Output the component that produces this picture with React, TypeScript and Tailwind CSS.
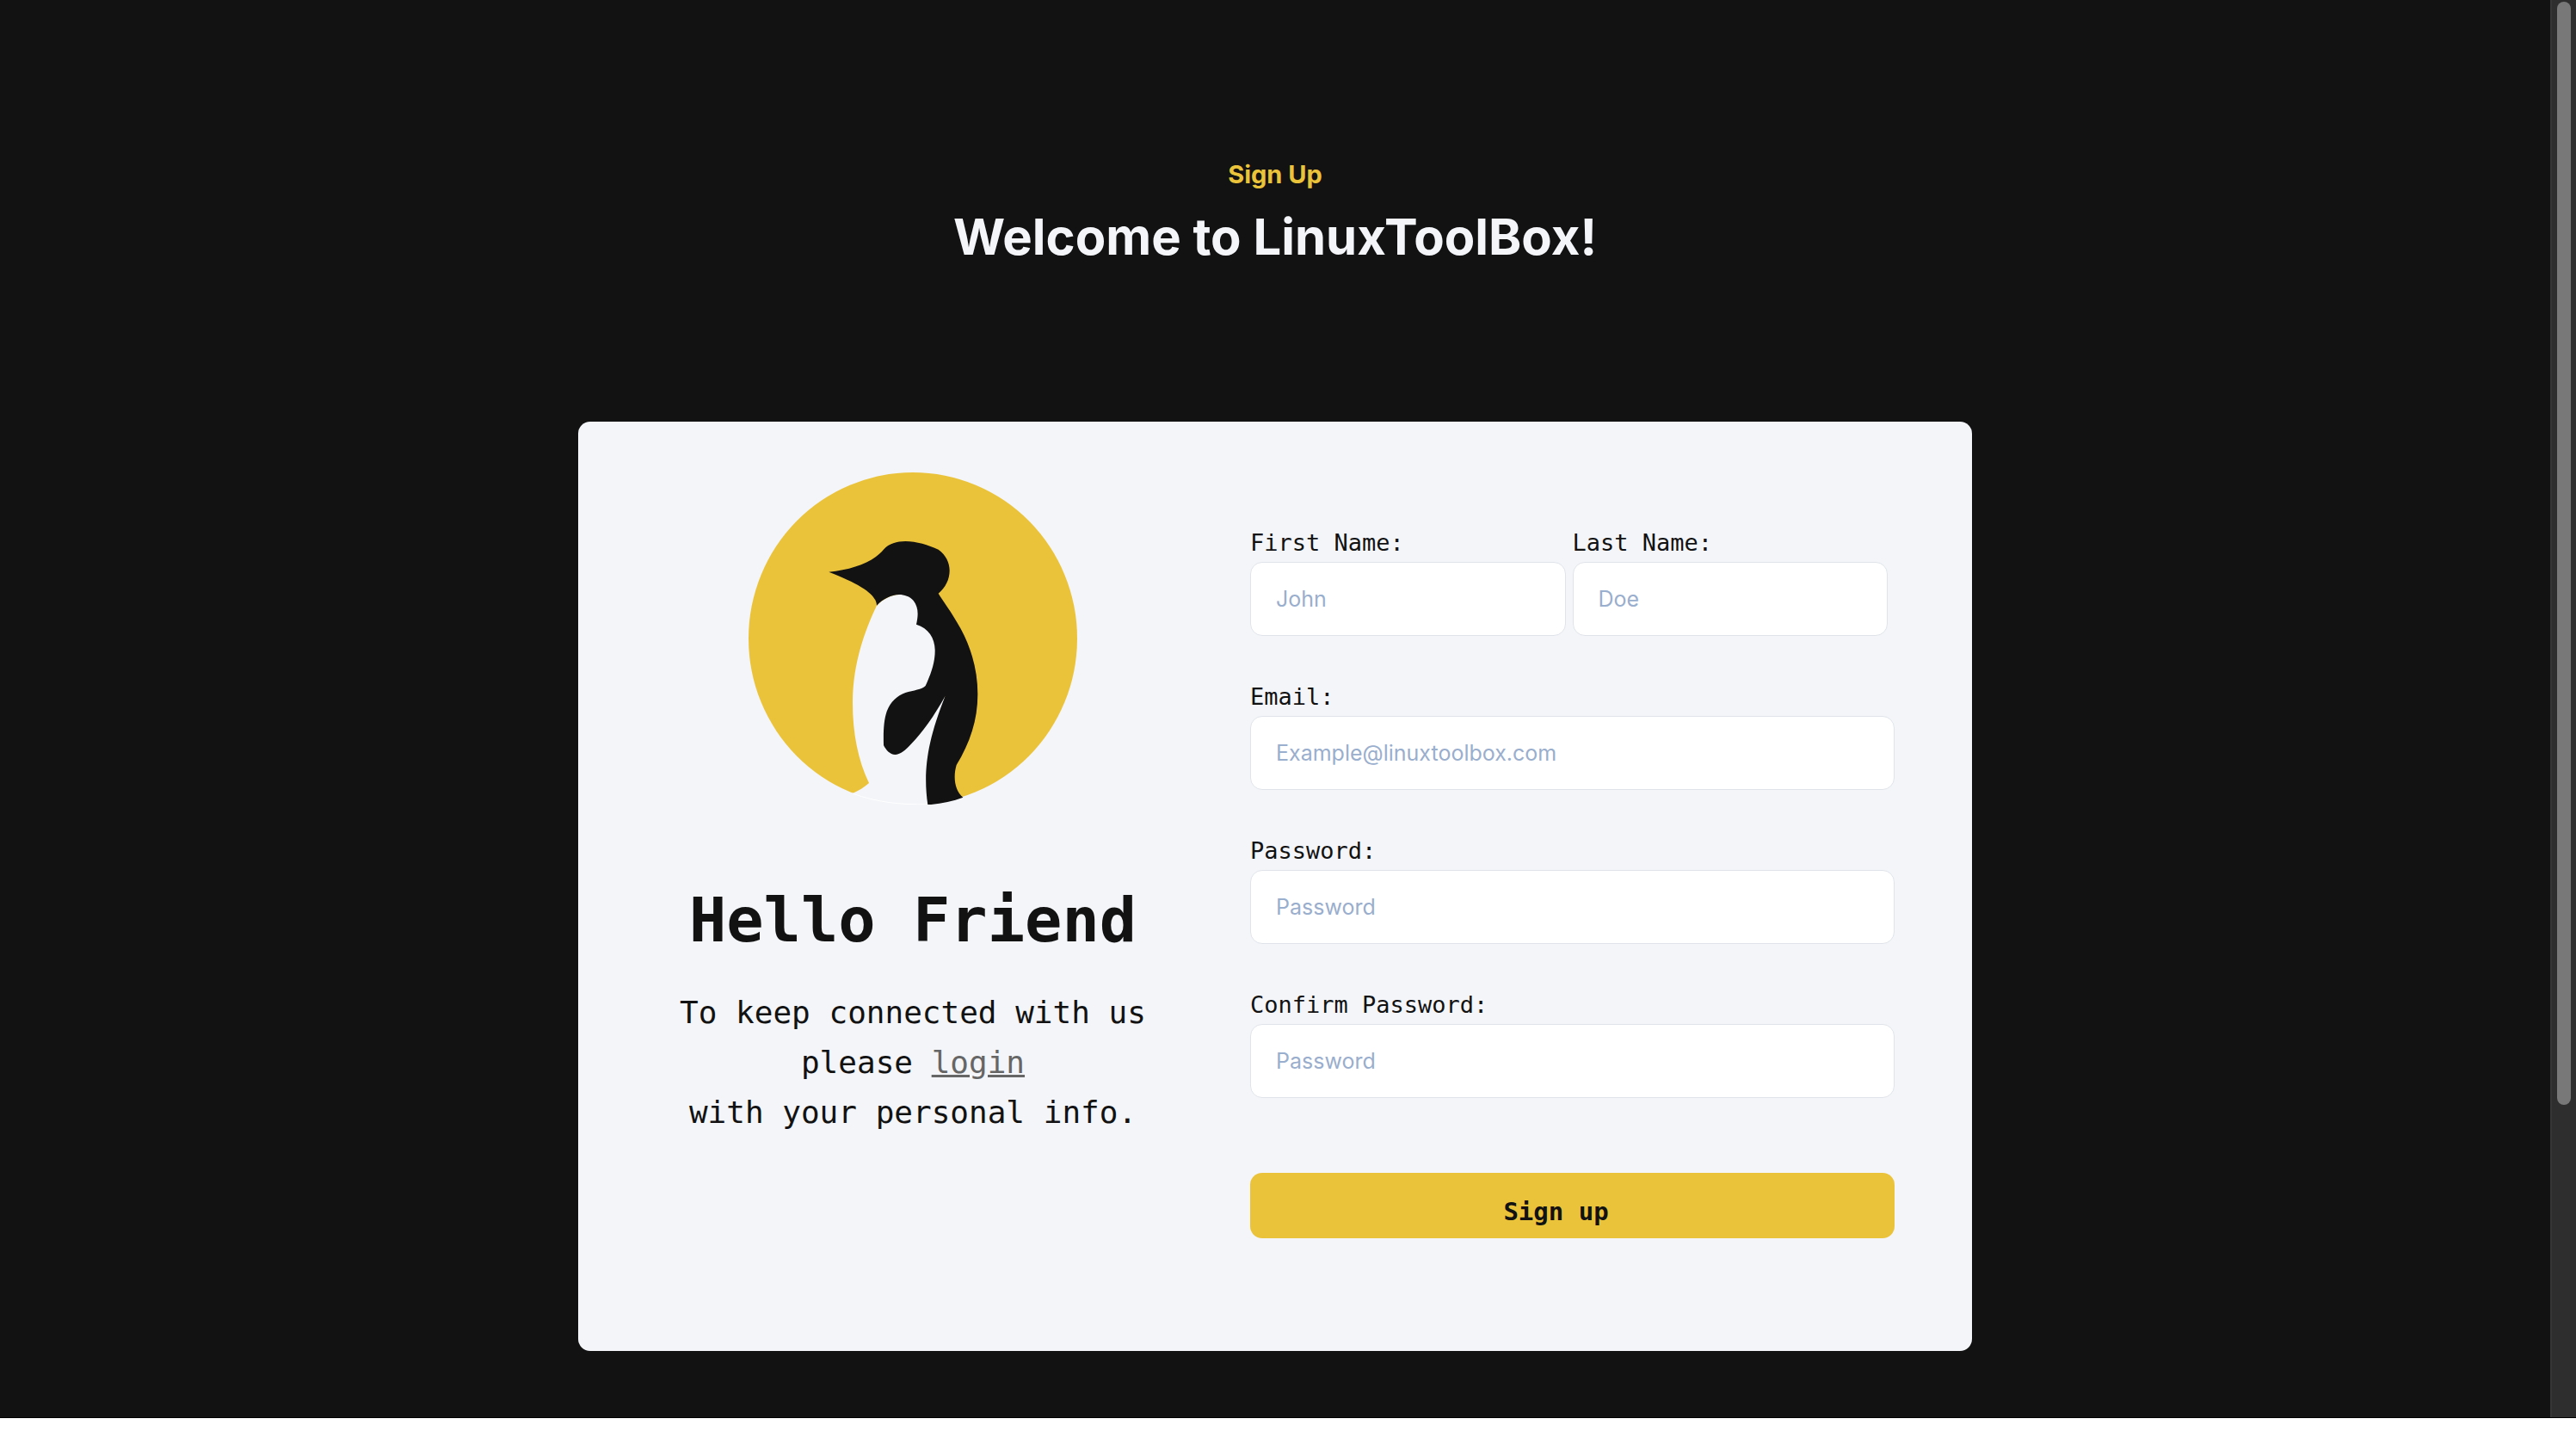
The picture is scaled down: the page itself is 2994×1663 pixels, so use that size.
import React from "react";

function PenguinLogo() {
  return (
    <svg
      viewBox="60 57 1146 1158"
      className="h-[386px] w-[382px]"
      role="img"
      aria-label="LinuxToolBox penguin"
    >
      <ellipse cx="633" cy="636" rx="573" ry="579" fill="#ebc33b" />
      <path
        fill="#f3f5f9"
        d="M507 521C458 625 423 735 423 860C423 965 442 1060 480 1140C463 1155 445 1166 421 1177L415 1216H685L745 837L800 700L700 480L585 470Z"
      />
      <path
        d="M424 1177C505 1206 590 1217 685 1214"
        fill="none"
        stroke="#ffffff"
        strokeWidth="3"
      />
      {/* area between the throat and the head */}
      <path fill="#f3f5f9" d="M507 521C530 497 558 484 585 483L640 520L600 600Z" />
      <path
        fill="#ebc33b"
        d="M340 404L507 521C530 497 558 484 585 483V440H340Z"
      />
      <path
        fill="#121212"
        d="M340 404C425 396 497 368 532 325C549 305 578 297 607 297C645 297 687 310 722 326C749 345 761 373 761 399C761 430 747 458 722 479C738 506 766 540 800 602C838 672 859 750 859 830C859 920 832 1000 785 1077C773 1118 778 1166 808 1190C770 1204 727 1213 685 1216C669 1105 680 1000 746 836C708 905 665 965 628 1003C607 1026 588 1041 571 1041C553 1041 538 1023 531 1008C530 960 531 923 542 890C555 856 578 836 607 825C635 816 665 815 677 801C698 756 711 715 710 675C709 635 688 600 645 587C653 550 652 527 635 504C622 489 603 483 585 483C558 484 530 497 507 521C505 480 447 446 340 404Z"
      />
    </svg>
  );
}

type FieldProps = {
  id: string;
  label: string;
  placeholder: string;
  type?: string;
};

function Field({ id, label, placeholder, type = "text" }: FieldProps) {
  return (
    <div className="flex min-w-0 flex-1 flex-col gap-[2px]">
      <label htmlFor={id} className="text-[27px] leading-[41px]">
        {label}
      </label>
      <input
        id={id}
        type={type}
        placeholder={placeholder}
        className="h-[86px] w-full rounded-[14px] border border-[#e0e4ea] bg-white px-[29px] font-['Inter',sans-serif] text-[25px] text-[#121212] outline-none placeholder:text-[#9aaecd]"
      />
    </div>
  );
}

export default function App() {
  return (
    <div className="min-h-screen bg-white">
      <div className="flex border-b border-black bg-[#121212] text-[#121212]">
        <main className="flex min-w-0 flex-1 flex-col items-center pb-[77px]">
          <header className="pt-[180px] text-center font-['Inter',sans-serif] font-bold">
            <p className="text-[29px] leading-[46px] text-[#ebc33b]">Sign Up</p>
            <h1 className="mt-[10px] text-[58px] leading-[78px] text-[#f3f5f9]">
              Welcome to LinuxToolBox!
            </h1>
          </header>

          <section className="mt-[176px] flex w-full max-w-[1620px] rounded-[14px] bg-[#f3f5f9] pr-[90px] pb-[131px] font-['DejaVu_Sans_Mono',monospace]">
            <div className="flex w-[778px] flex-col items-center pt-[59px] text-center">
              <PenguinLogo />
              <h2 className="mt-[76px] text-[72px] leading-[116px] font-bold">
                Hello Friend
              </h2>
              <p className="mt-[21px] text-[36px] leading-[58px]">
                To keep connected with us
                <br />
                please{" "}
                <a href="#login" className="text-[#666666] underline">
                  login
                </a>
                <br />
                with your personal info.
              </p>
            </div>

            <form
              className="ml-[3px] flex min-w-0 flex-1 flex-col gap-[50px] pt-[120px]"
              onSubmit={(event) => event.preventDefault()}
            >
              <div className="flex gap-2 pr-2">
                <Field id="first-name" label="First Name:" placeholder="John" />
                <Field id="last-name" label="Last Name:" placeholder="Doe" />
              </div>
              <Field
                id="email"
                label="Email:"
                placeholder="Example@linuxtoolbox.com"
                type="email"
              />
              <Field
                id="password"
                label="Password:"
                placeholder="Password"
                type="password"
              />
              <Field
                id="confirm-password"
                label="Confirm Password:"
                placeholder="Password"
                type="password"
              />
              <button
                type="submit"
                className="mt-[37px] h-[76px] w-full rounded-[14px] bg-[#ebc33b] pt-4 pr-[38px] text-[29px] font-bold"
              >
                Sign up
              </button>
            </form>
          </section>
        </main>

        <div
          aria-hidden="true"
          className="flex w-[30px] justify-center border-l-2 border-[#363636] bg-[#2e2e2e] pt-[2px]"
        >
          <div className="h-[1282px] w-4 rounded-full bg-[#787878]" />
        </div>
      </div>
    </div>
  );
}
